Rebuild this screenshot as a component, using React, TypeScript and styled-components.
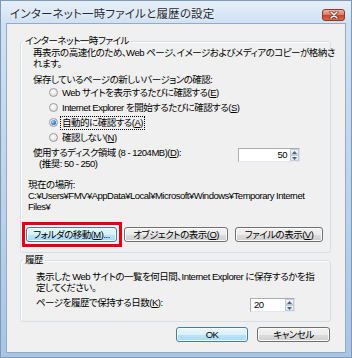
import React from 'react';
import styled, { createGlobalStyle, css } from 'styled-components';


const GlobalStyle = createGlobalStyle`
  html, body {
    margin: 0;
    padding: 0;
  }

  body {
    width: 352px;
    height: 358px;
    overflow: hidden;
    background: #ffffff;
    font-family: 'Liberation Sans', 'Noto Sans CJK JP', sans-serif;
    font-size: 9.5px;
    letter-spacing: -0.5px;
    font-feature-settings: 'palt';
    color: #000000;
  }
`;

const Window = styled.div`
  display: flex;
  flex-direction: column;
  width: 352px;
  height: 358px;
  box-sizing: border-box;
  border: 1px solid #7f9ab9;
  background: linear-gradient(180deg, #e6eff8 0px, #d0e1f2 22px, #bcd3ea 55%, #a9c5e3 100%);
`;

const TitleBar = styled.div`
  display: flex;
  align-items: flex-start;
  justify-content: space-between;
  height: 22px;
  padding: 0 6px 0 9px;
`;

const Title = styled.div`
  padding-top: 7px;
  font-size: 11.5px;
  letter-spacing: 0.2px;
  line-height: 13px;
  color: #1f2a36;
  text-shadow: 0 0 5px rgba(255, 255, 255, 0.9);
  white-space: nowrap;
`;

const CloseButton = styled.div`
  display: flex;
  align-items: center;
  justify-content: center;
  width: 23px;
  height: 12px;
  margin-top: 8px;
  box-sizing: border-box;
  border: 1px solid #8a3a2c;
  border-radius: 3px;
  background: linear-gradient(180deg, #eeb3a3 0%, #dc7f66 45%, #c9462c 55%, #d86a4b 100%);
`;

const Client = styled.div`
  display: flex;
  flex-direction: column;
  flex: 1 0;
  margin: 0 5px 4px;
  padding: 11px 14px 10px 13px;
  border: 1px solid #93abc7;
  background: #f0f0f0;
`;

const GroupBox = styled.fieldset<{ $indent: number; $bottom: number }>`
  margin: 0;
  min-width: 0;
  padding: 0 8px ${props => props.$bottom}px ${props => props.$indent}px;
  border: 1px solid #d5dfe5;
  border-radius: 3px;
  box-shadow: inset 1px 1px 0 #ffffff;

  & + & {
    margin-top: 1px;
  }

  legend {
    margin-left: ${props => 2 - props.$indent}px;
    padding: 0 2px;
    line-height: 12px;
  }
`;

const Text = styled.p<{ $top?: number; $shift?: number }>`
  margin: ${props => props.$top || 0}px 0 0 ${props => props.$shift || 0}px;
  line-height: 11px;
  white-space: nowrap;
`;

const AccessKey = styled.span`
  text-decoration: underline;
`;

const RadioList = styled.div`
  display: flex;
  flex-direction: column;
  padding-left: 16px;
`;

const RadioRow = styled.label`
  display: flex;
  align-items: center;
  gap: 3px;
  height: 15px;
  white-space: nowrap;
`;

const RadioMark = styled.span<{ $checked?: boolean }>`
  display: flex;
  align-items: center;
  justify-content: center;
  flex: 0 0 9px;
  width: 9px;
  height: 9px;
  box-sizing: border-box;
  border: 1px solid #9a9a9a;
  border-radius: 50%;
  background: radial-gradient(circle at 40% 35%, #ffffff 0%, #e8e8e8 55%, #cfcfcf 100%);

  &::after {
    content: '';
    display: ${props => props.$checked ? 'block' : 'none'};
    width: 5px;
    height: 5px;
    border-radius: 50%;
    background: radial-gradient(circle at 35% 35%, #a8dcff 0%, #2e7fd6 55%, #114f9c 100%);
  }
`;

const RadioText = styled.span<{ $focus?: boolean }>`
  padding: 0 1px;
  line-height: 12px;
  ${props => props.$focus && css`
    outline: 1px dotted #000000;
  `}
`;

const SettingRow = styled.div<{ $top: number; $right: number }>`
  display: flex;
  align-items: flex-start;
  margin-top: ${props => props.$top}px;
  padding-right: ${props => props.$right}px;
`;

const SettingLabel = styled.div`
  flex: 1 0;
`;

const SpinBox = styled.div<{ $width: number; $align: 'left' | 'right' }>`
  display: flex;
  width: ${props => props.$width}px;
  height: 14px;
  margin-top: 1px;
  box-sizing: border-box;
  border: 1px solid #abadb3;
  border-right-color: #dbdfe6;
  border-bottom-color: #e3e9ef;
  background: #ffffff;
`;

const SpinValue = styled.span<{ $align: 'left' | 'right' }>`
  flex: 1 0;
  padding: 0 3px;
  line-height: 12px;
  text-align: ${props => props.$align};
`;

const SpinButtons = styled.div`
  display: flex;
  flex-direction: column;
  width: 9px;
`;

const SpinButton = styled.div`
  display: flex;
  align-items: center;
  justify-content: center;
  flex: 1 0;
  box-sizing: border-box;
  border: 1px solid #c2cbd6;
  background: linear-gradient(180deg, #f6f8fa 0%, #dde3ea 100%);
`;

const ButtonRow = styled.div`
  display: flex;
  justify-content: space-between;
  width: 297px;
  margin: 15px 0 0 -7px;
`;

const Footer = styled.div`
  display: flex;
  justify-content: flex-end;
  gap: 9px;
  margin-top: auto;
  padding-right: 1px;
`;

const Button = styled.button<{ $width: number; $active?: boolean; $marked?: boolean }>`
  position: relative;
  width: ${props => props.$width}px;
  height: 15px;
  padding: 0;
  box-sizing: border-box;
  border: 1px solid #707070;
  border-radius: 3px;
  background: linear-gradient(180deg, #f2f2f2 0%, #ebebeb 50%, #dddddd 51%, #cfcfcf 100%);
  box-shadow: inset 0 0 0 1px #fbfbfb;
  font: inherit;
  letter-spacing: inherit;
  line-height: 12px;
  color: #000000;
  white-space: nowrap;

  ${props => props.$active && css`
    border-color: #3c7fb1;
    background: linear-gradient(180deg, #eaf6fd 0%, #d9f0fc 50%, #bee6fd 51%, #a7d9f5 100%);
  `}

  ${props => props.$marked && css`
    &::after {
      content: '';
      position: absolute;
      top: -6px;
      right: -6px;
      bottom: -6px;
      left: -5px;
      border: 3px solid #e60012;
    }
  `}
`;


function Arrow(props: { up?: boolean }) {
  return (
    <svg width="5" height="3" viewBox="0 0 5 3">
      <path d={props.up ? 'M0 3 L2.5 0 L5 3 Z' : 'M0 0 L2.5 3 L5 0 Z'} fill="#4d6185" />
    </svg>
  );
}

function Spin(props: { value: number; width: number; align: 'left' | 'right' }) {
  return (
    <SpinBox $width={props.width} $align={props.align}>
      <SpinValue $align={props.align}>{ props.value }</SpinValue>
      <SpinButtons>
        <SpinButton><Arrow up /></SpinButton>
        <SpinButton><Arrow /></SpinButton>
      </SpinButtons>
    </SpinBox>
  );
}

const radios = [
  { text: 'Web サイトを表示するたびに確認する', key: 'E' },
  { text: 'Internet Explorer を開始するたびに確認する', key: 'S' },
  { text: '自動的に確認する', key: 'A', checked: true },
  { text: '確認しない', key: 'N' },
];


function App() {
  return (
    <>
      <GlobalStyle />
      <Window>
        <TitleBar>
          <Title>インターネット一時ファイルと履歴の設定</Title>
          <CloseButton>
            <svg width="10" height="8" viewBox="0 0 10 8">
              <path d="M2 1 L8 7 M8 1 L2 7" stroke="#6b2418" strokeWidth="3" strokeLinecap="round" />
              <path d="M2 1 L8 7 M8 1 L2 7" stroke="#ffffff" strokeWidth="1.6" strokeLinecap="round" />
            </svg>
          </CloseButton>
        </TitleBar>

        <Client>
          <GroupBox $indent={12} $bottom={10}>
            <legend>インターネット一時ファイル</legend>
            <Text>
              再表示の高速化のため、Web ページ、イメージおよびメディアのコピーが格納さ<br />れます。
            </Text>
            <Text $top={5}>保存しているページの新しいバージョンの確認:</Text>
            <RadioList>
              {radios.map(item => (
                <RadioRow key={item.key}>
                  <RadioMark $checked={item.checked} />
                  <RadioText $focus={item.checked}>
                    { item.text }(<AccessKey>{ item.key }</AccessKey>)
                  </RadioText>
                </RadioRow>
              ))}
            </RadioList>
            <SettingRow $top={2} $right={22}>
              <SettingLabel>
                <Text>使用するディスク領域 (8 - 1204MB)(<AccessKey>D</AccessKey>):</Text>
                <Text $shift={6}>(推奨: 50 - 250)</Text>
              </SettingLabel>
              <Spin value={50} width={62} align="right" />
            </SettingRow>
            <Text $top={10} $shift={-5}>現在の場所:</Text>
            <Text $shift={-5}>
              C:¥Users¥FMV¥AppData¥Local¥Microsoft¥Windows¥Temporary Internet<br />Files¥
            </Text>
            <ButtonRow>
              <Button $width={91} $active $marked>フォルダの移動(<AccessKey>M</AccessKey>)...</Button>
              <Button $width={104}>オブジェクトの表示(<AccessKey>O</AccessKey>)</Button>
              <Button $width={88}>ファイルの表示(<AccessKey>V</AccessKey>)</Button>
            </ButtonRow>
          </GroupBox>

          <GroupBox $indent={15} $bottom={9}>
            <legend>履歴</legend>
            <Text $top={5}>
              表示した Web サイトの一覧を何日間、Internet Explorer に保存するかを指<br />定してください。
            </Text>
            <SettingRow $top={4} $right={27}>
              <SettingLabel>
                <Text>ページを履歴で保持する日数(<AccessKey>K</AccessKey>):</Text>
              </SettingLabel>
              <Spin value={20} width={45} align="left" />
            </SettingRow>
          </GroupBox>

          <Footer>
            <Button $width={72} $active>OK</Button>
            <Button $width={73}>キャンセル</Button>
          </Footer>
        </Client>
      </Window>
    </>
  );
}

export default App;
